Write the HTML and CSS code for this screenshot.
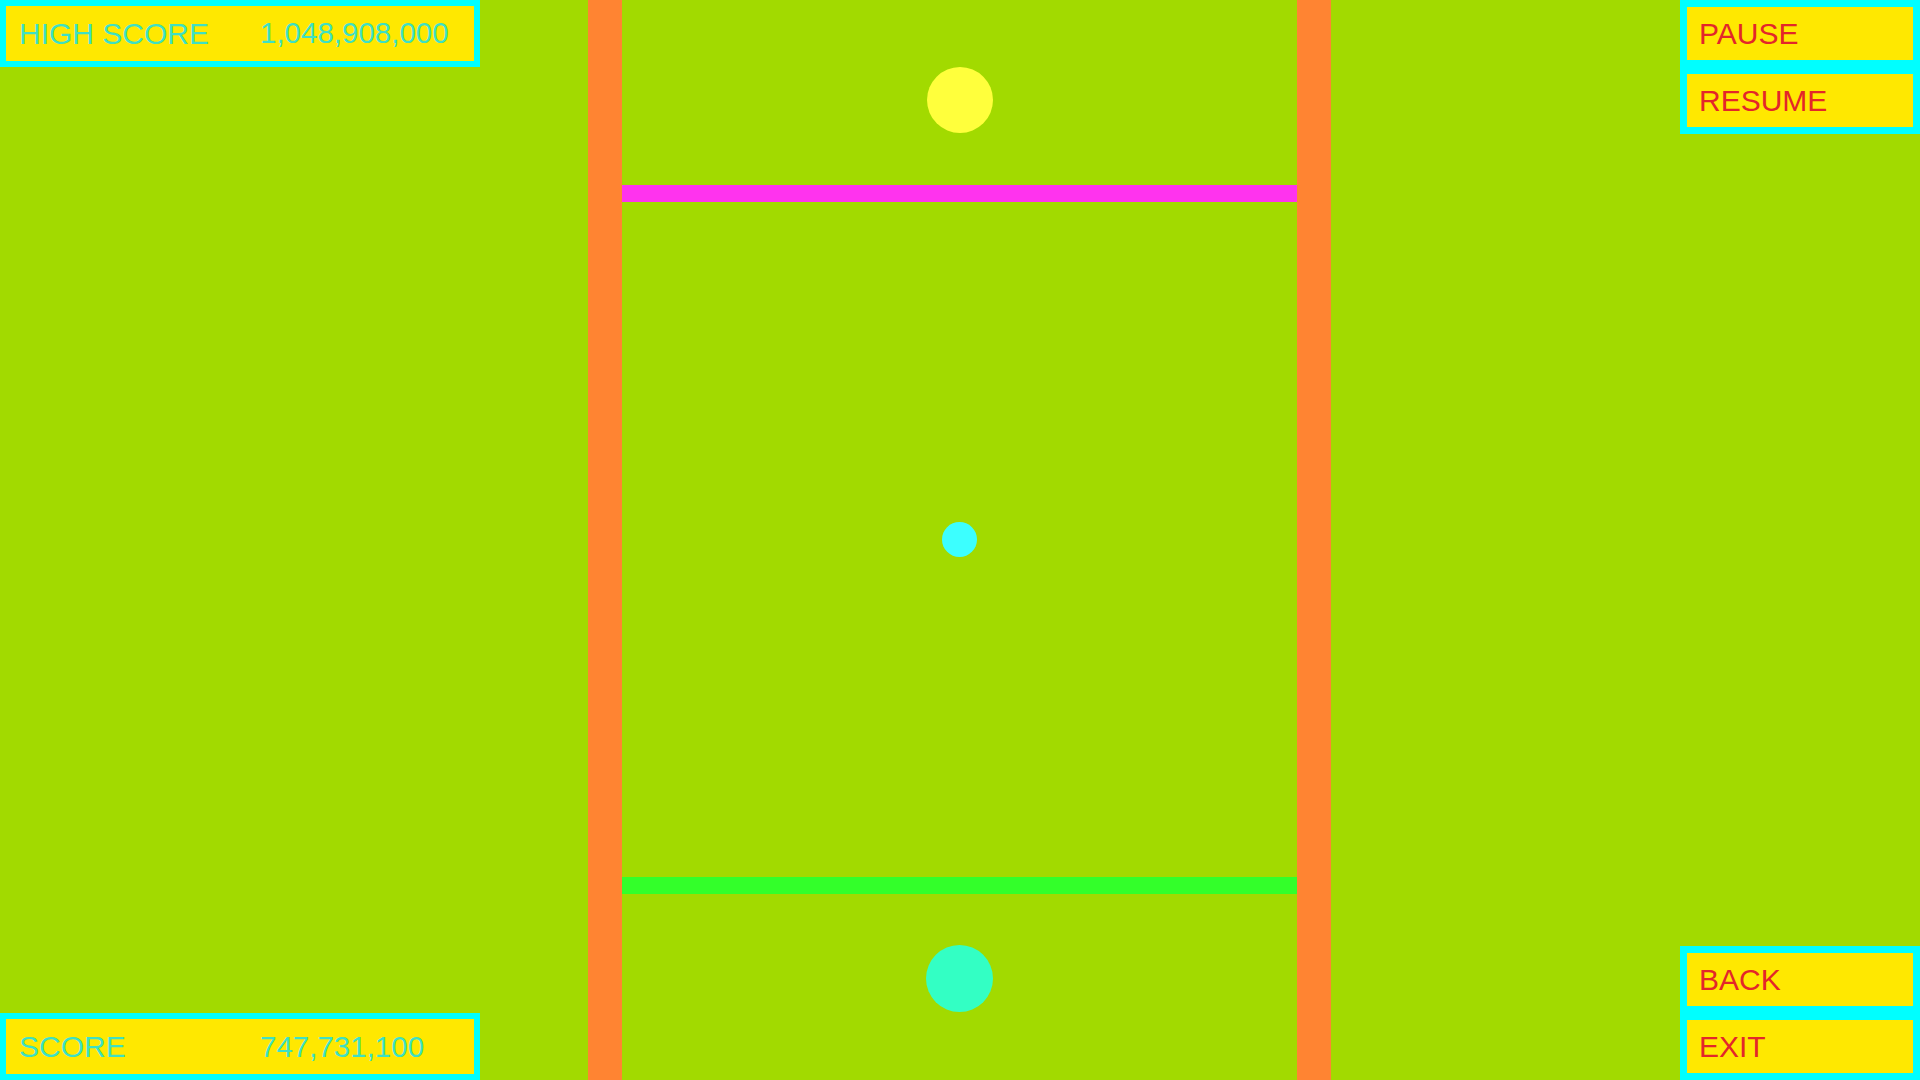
FILE: index.html
```html
<!DOCTYPE html>
<html lang="en">
<head>
<meta charset="utf-8">
<title>Game</title>
<link rel="stylesheet" href="styles.css">
</head>
<body>
<div class="screen">
  <div class="side side-left">
    <div class="stat"><span class="stat-label">HIGH SCORE</span><span class="stat-value stat-value-up">1,048,908,000</span></div>
    <div class="stat"><span class="stat-label">SCORE</span><span class="stat-value">747,731,100</span></div>
  </div>
  <div class="field">
    <div class="ball ball-top"></div>
    <div class="paddle paddle-top"></div>
    <div class="ball ball-mid"></div>
    <div class="paddle paddle-bottom"></div>
    <div class="ball ball-bottom"></div>
  </div>
  <div class="side side-right">
    <div class="btn-group">
      <div class="btn">PAUSE</div>
      <div class="btn">RESUME</div>
    </div>
    <div class="btn-group">
      <div class="btn">BACK</div>
      <div class="btn">EXIT</div>
    </div>
  </div>
</div>
</body>
</html>
```

FILE: styles.css
```css
* { box-sizing: border-box; }
html, body {
  margin: 0;
  padding: 0;
  width: 1920px;
  height: 1080px;
  overflow: hidden;
  background: #a2da00;
  font-family: "Liberation Sans", Arial, sans-serif;
}
.screen {
  display: grid;
  grid-template-columns: 480px 108px 743px 1fr 240px;
  height: 1080px;
}
.side {
  display: flex;
  flex-direction: column;
  justify-content: space-between;
  height: 1080px;
}
.side-left { grid-column: 1; }
.side-right { grid-column: 5; }
.field { grid-column: 3; }

.stat {
  height: 67px;
  width: 480px;
  border: 6px solid #00ffff;
  background: #ffe800;
  display: flex;
  align-items: center;
  padding-left: 13px;
  font-size: 30px;
  color: #3ee0c4;
}
.stat-label { width: 241px; }
.stat-value { font-size: 29.5px; }
.stat-value-up { position: relative; top: -1px; }

.btn-group { display: flex; flex-direction: column; }
.btn {
  height: 67px;
  width: 240px;
  border: 7px solid #00ffff;
  background: #ffe800;
  display: flex;
  align-items: center;
  padding-left: 12px;
  font-size: 30px;
  color: #e3262a;
}

.field {
  height: 1080px;
  background: #a2da00;
  border-left: 34px solid #ff8432;
  border-right: 34px solid #ff8432;
  display: flex;
  flex-direction: column;
  align-items: center;
}
.ball { border-radius: 50%; flex: none; }
.ball-top {
  width: 66px; height: 66px;
  margin-top: 67px;
  background: #ffff3c;
}
.paddle { width: 100%; height: 17px; flex: none; }
.paddle-top { margin-top: 52px; background: #ff33ee; }
.ball-mid {
  width: 35px; height: 35px;
  margin-top: 320px;
  background: #3cffff;
}
.paddle-bottom { margin-top: 320px; background: #33ff2a; }
.ball-bottom {
  width: 67px; height: 67px;
  margin-top: 51px;
  background: #33ffc4;
}
```
